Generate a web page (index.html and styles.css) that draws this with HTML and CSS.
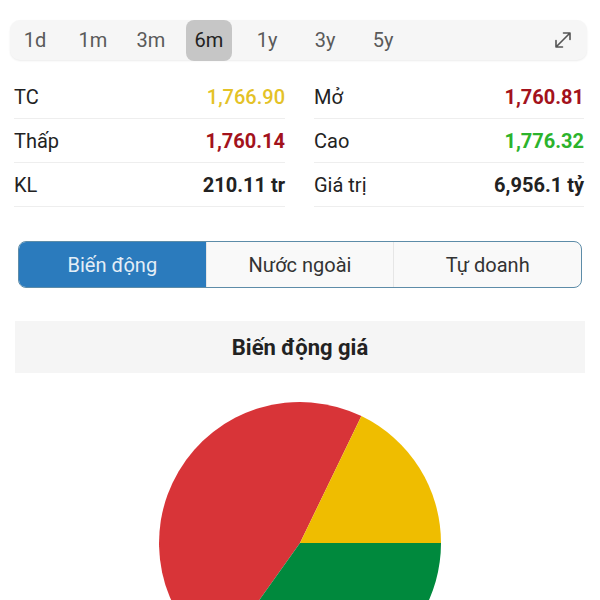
FILE: index.html
```html
<!DOCTYPE html>
<html lang="vi">
<head>
  <meta charset="UTF-8" />
  <title>Biến động giá</title>
  <link rel="stylesheet" href="styles.css">
</head>
<body>
  <div class="periods">
    <span class="period">1d</span>
    <span class="period">1m</span>
    <span class="period">3m</span>
    <span class="period active">6m</span>
    <span class="period">1y</span>
    <span class="period">3y</span>
    <span class="period">5y</span>
    <svg class="expand" width="20" height="20" viewBox="0 0 20 20">
      <path d="M3 17 L17 3 M10.5 3 H17 V9.5 M3 10.5 V17 H9.5" fill="none" stroke="#555" stroke-width="1.6" stroke-linecap="round" stroke-linejoin="round"/>
    </svg>
  </div>

  <div class="stats">
    <div class="stat"><span>TC</span><b class="ref">1,766.90</b></div>
    <div class="stat"><span>Mở</span><b class="down">1,760.81</b></div>
    <div class="stat"><span>Thấp</span><b class="down">1,760.14</b></div>
    <div class="stat"><span>Cao</span><b class="up">1,776.32</b></div>
    <div class="stat"><span>KL</span><b>210.11 tr</b></div>
    <div class="stat"><span>Giá trị</span><b>6,956.1 tỷ</b></div>
  </div>

  <div class="tabs">
    <div class="tab active">Biến động</div>
    <div class="tab">Nước ngoài</div>
    <div class="tab">Tự doanh</div>
  </div>

  <div class="section-title">Biến động giá</div>

  <div class="chart">
    <svg width="282" height="282" viewBox="0 0 282 282">
      <path d="M141 141 L59.1 255.8 A141 141 0 0 1 202.4 14.1 Z" fill="#d83438"/>
      <path d="M141 141 L202.4 14.1 A141 141 0 0 1 282 141 Z" fill="#efbd00"/>
      <path d="M141 141 L282 141 A141 141 0 0 1 59.1 255.8 Z" fill="#00893d"/>
    </svg>
  </div>
</body>
</html>
```

FILE: styles.css
```css
html, body {
  margin: 0;
  padding: 0;
  background: #fff;
  font-family: Roboto, "Noto Sans", sans-serif;
  color: #222;
}

.periods {
  display: flex;
  align-items: center;
  gap: 12px;
  margin: 20px 13px 0 10px;
  height: 40px;
  padding: 0 2px;
  background: #f6f6f6;
  border-radius: 10px;
  box-shadow: 0 1px 2px rgba(0,0,0,0.08);
}

.period {
  width: 46px;
  height: 41px;
  display: flex;
  align-items: center;
  justify-content: center;
  font-size: 20px;
  color: #5a5a5a;
  border-radius: 8px;
}

.period.active {
  background: #c6c6c6;
  color: #222;
}

.expand {
  margin-left: auto;
  margin-right: 12px;
}

.stats {
  display: grid;
  grid-template-columns: 271px 270px;
  column-gap: 29px;
  margin: 15px 0 0 14px;
}

.stat {
  display: flex;
  justify-content: space-between;
  align-items: center;
  height: 43px;
  border-bottom: 1px solid #eeeeee;
  font-size: 20px;
}

.stat b {
  font-weight: 700;
  color: #222;
}

.stat b.ref { color: #e4c227; font-weight: 500; }
.stat b.down { color: #a3121c; }
.stat b.up { color: #2cb32c; }

.tabs {
  display: flex;
  margin: 34px 18px 0 18px;
  height: 45px;
  border: 1.5px solid #5d8ca8;
  border-radius: 8px;
  overflow: hidden;
  background: #f9f9f9;
}

.tab {
  flex: 1;
  display: flex;
  align-items: center;
  justify-content: center;
  font-size: 20px;
  color: #333;
  border-left: 1px solid #e6e6e6;
}

.tab:first-child { border-left: none; }

.tab.active {
  background: #2b7bbd;
  color: #e3eef7;
}

.section-title {
  margin: 33px 15px 0 15px;
  height: 52px;
  background: #f5f5f5;
  display: flex;
  align-items: center;
  justify-content: center;
  font-size: 22px;
  font-weight: 700;
  color: #222;
}

.chart {
  display: flex;
  justify-content: center;
  margin-top: 29px;
}
```
